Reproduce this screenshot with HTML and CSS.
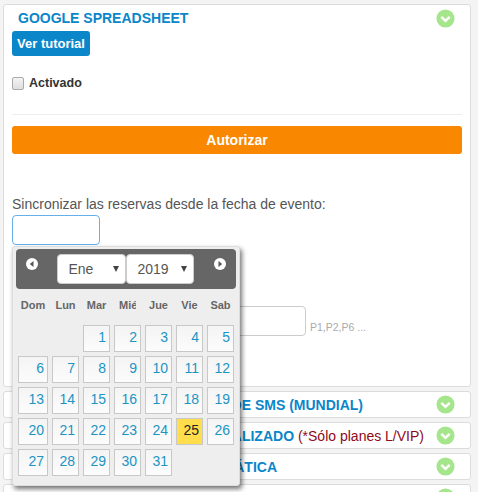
FILE: index.html
```html
<!DOCTYPE html>
<html lang="en">
<head>
    <meta charset="UTF-8">
    <meta name="viewport" content="width=device-width, initial-scale=1.0">
    <title>Google Spreadsheet</title>
    <link rel="stylesheet" href="styles.css">
</head>
<body>
    <div class="wrapper">
        <section class="card open">
            <div class="card-head">
                <h3 class="title">GOOGLE SPREADSHEET</h3>
                <svg class="toggle" viewBox="0 0 20 20"><circle cx="10" cy="10" r="9.5" fill="#a5e58b"/><path d="M5.6 8.2 10 12.4 14.4 8.2" fill="none" stroke="#fff" stroke-width="2.6"/></svg>
            </div>
            <a class="tutorial">Ver tutorial</a>
            <label class="check"><input type="checkbox"> Activado</label>
            <hr>
            <button class="authorize">Autorizar</button>
            <p class="sync">Sincronizar las reservas desde la fecha de evento:</p>
            <input class="date-input" type="text">
            <div class="plans">
                <input class="plans-input" type="text">
                <span class="hint">P1,P2,P6 ...</span>
            </div>
        </section>
        <section class="card">
            <h3 class="title sms">DE SMS (MUNDIAL)</h3>
            <svg class="toggle" viewBox="0 0 20 20"><circle cx="10" cy="10" r="9.5" fill="#a5e58b"/><path d="M5.6 8.2 10 12.4 14.4 8.2" fill="none" stroke="#fff" stroke-width="2.6"/></svg>
        </section>
        <section class="card">
            <h3 class="title custom">PERSONALIZADO <span class="note">(*Sólo planes L/VIP)</span></h3>
            <svg class="toggle" viewBox="0 0 20 20"><circle cx="10" cy="10" r="9.5" fill="#a5e58b"/><path d="M5.6 8.2 10 12.4 14.4 8.2" fill="none" stroke="#fff" stroke-width="2.6"/></svg>
        </section>
        <section class="card">
            <h3 class="title auto">AUTOMÁTICA</h3>
            <svg class="toggle" viewBox="0 0 20 20"><circle cx="10" cy="10" r="9.5" fill="#a5e58b"/><path d="M5.6 8.2 10 12.4 14.4 8.2" fill="none" stroke="#fff" stroke-width="2.6"/></svg>
        </section>
        <section class="card">
            <svg class="toggle" viewBox="0 0 20 20"><circle cx="10" cy="10" r="9.5" fill="#a5e58b"/></svg>
        </section>
    </div>

    <div class="calendar">
        <div class="cal-head">
            <svg class="arrow" viewBox="0 0 12 12"><circle cx="6" cy="6" r="6" fill="#fff"/><path d="M7.5 3 3.8 6 7.5 9z" fill="#555"/></svg>
            <div class="selects">
                <div class="select">Ene</div>
                <div class="select">2019</div>
            </div>
            <svg class="arrow" viewBox="0 0 12 12"><circle cx="6" cy="6" r="6" fill="#fff"/><path d="M4.5 3 8.2 6 4.5 9z" fill="#555"/></svg>
        </div>
        <div class="names">
            <span>Dom</span><span>Lun</span><span>Mar</span><span class="clip">Miér</span><span>Jue</span><span>Vie</span><span>Sab</span>
        </div>
        <div class="days">
            <i></i><i></i>
            <a class="day">1</a><a class="day">2</a><a class="day">3</a><a class="day">4</a><a class="day">5</a>
            <a class="day">6</a><a class="day">7</a><a class="day">8</a><a class="day">9</a><a class="day">10</a><a class="day">11</a><a class="day">12</a>
            <a class="day">13</a><a class="day">14</a><a class="day">15</a><a class="day">16</a><a class="day">17</a><a class="day">18</a><a class="day">19</a>
            <a class="day">20</a><a class="day">21</a><a class="day">22</a><a class="day">23</a><a class="day">24</a><a class="day today">25</a><a class="day">26</a>
            <a class="day">27</a><a class="day">28</a><a class="day">29</a><a class="day">30</a><a class="day">31</a>
        </div>
    </div>
</body>
</html>
```
FILE: styles.css
```css
*{
    box-sizing: border-box;
    font-family: "Liberation Sans", sans-serif;
}
html, body{
    height: 100%;
    overflow: hidden;
}
body{
    margin: 0;
    background-color: #f4f4f4;
}
.wrapper{
    display: flex;
    flex-direction: column;
    gap: 4px;
    padding: 4px 7px 0 3px;
}
.card{
    display: flex;
    flex-shrink: 0;
    align-items: center;
    justify-content: flex-end;
    height: 27px;
    padding-right: 15px;
    background-color: #fff;
    border: 1px solid #dcdcdc;
    border-radius: 3px;
}
.card.open{
    display: block;
    height: 383px;
    padding: 0 8px;
}
.card-head{
    display: flex;
    align-items: center;
    justify-content: space-between;
    height: 26px;
    padding: 1px 7px 0 6px;
}
.title{
    margin: 0;
    font-size: 14px;
    font-weight: bold;
    color: #0a86c9;
    white-space: nowrap;
}
.card-head .title{
    padding-bottom: 2px;
}
.note{
    font-weight: normal;
    color: #8f0a1a;
}
.sms{ margin-right: 73px; }
.custom{ margin-right: 12px; }
.auto{ margin-right: 159px; }
.toggle{
    flex-shrink: 0;
    width: 19px;
    height: 19px;
}
.tutorial{
    display: block;
    width: 78px;
    height: 25px;
    background-color: #0a86c9;
    border-radius: 3px;
    color: #fff;
    font-size: 13px;
    font-weight: bold;
    line-height: 25px;
    text-align: center;
}
.check{
    display: flex;
    align-items: center;
    gap: 5px;
    height: 14px;
    margin-top: 20px;
    font-size: 12.5px;
    font-weight: bold;
    color: #333;
}
.check input{
    appearance: none;
    width: 12px;
    height: 13px;
    margin: 0;
    background: linear-gradient(#f4f4f4, #dedede);
    border: 1px solid #aaa;
    border-radius: 2px;
}
hr{
    margin: 24px 0 11px;
    border: none;
    border-top: 1px solid #eee;
}
.authorize{
    display: block;
    width: 100%;
    height: 28px;
    background-color: #f98800;
    border: none;
    border-radius: 3px;
    color: #fff;
    font-size: 14px;
    font-weight: bold;
}
.sync{
    margin: 42px 0 0;
    font-size: 14px;
    line-height: 16px;
    color: #555;
}
.date-input{
    display: block;
    width: 88px;
    height: 30px;
    margin-top: 3px;
    border: 1px solid #66afe9;
    border-radius: 4px;
    outline: none;
}
.plans{
    display: flex;
    align-items: flex-end;
    gap: 4px;
    margin-top: 61px;
}
.plans-input{
    width: 294px;
    height: 30px;
    border: 1px solid #ccc;
    border-radius: 4px;
}
.hint{
    padding-bottom: 3px;
    font-size: 10.5px;
    color: #aaa;
}
.calendar{
    position: absolute;
    top: 246px;
    left: 12px;
    width: 228px;
    height: 240px;
    padding: 2px 3px;
    background-color: #eee;
    border: 1px solid #ddd;
    border-radius: 3px;
    box-shadow: 2px 3px 5px rgba(0, 0, 0, .55);
}
.cal-head{
    display: flex;
    align-items: center;
    justify-content: space-between;
    height: 40px;
    padding: 0 10px 10px;
    background-color: #666;
    border-radius: 4px;
}
.arrow{
    width: 12px;
    height: 12px;
}
.selects{
    display: flex;
    margin: 10px 2px 0 0;
}
.select{
    position: relative;
    height: 30px;
    padding-left: 11px;
    background-color: #fff;
    border: 1px solid #ccc;
    border-radius: 4px;
    font-size: 14px;
    line-height: 28px;
    color: #555;
}
.select:first-child{ width: 69px; }
.select:last-child{ width: 68px; }
.select::after{
    content: "";
    position: absolute;
    top: 11px;
    right: 6px;
    border-left: 3px solid transparent;
    border-right: 3px solid transparent;
    border-top: 6px solid #444;
}
.names{
    display: grid;
    grid-template-columns: 30px repeat(6, 27px);
    column-gap: 4px;
    justify-items: center;
    height: 26px;
    margin: 10px 0 0 2px;
    font-size: 11px;
    font-weight: bold;
    color: #666;
}
.names .clip{
    width: 17px;
    overflow: hidden;
    white-space: nowrap;
}
.days{
    display: grid;
    grid-template-columns: 30px repeat(6, 27px);
    grid-auto-rows: 27px;
    gap: 4px;
    margin-left: 2px;
}
.days i{
    display: block;
}
.day{
    padding-right: 3px;
    background: linear-gradient(#f4f4f4, #fcfcfc);
    border: 1px solid #c8c8c8;
    font-size: 14px;
    line-height: 23px;
    text-align: right;
    color: #1c94c4;
}
.day.today{
    background: #ffdd4d;
    color: #222;
}
```
